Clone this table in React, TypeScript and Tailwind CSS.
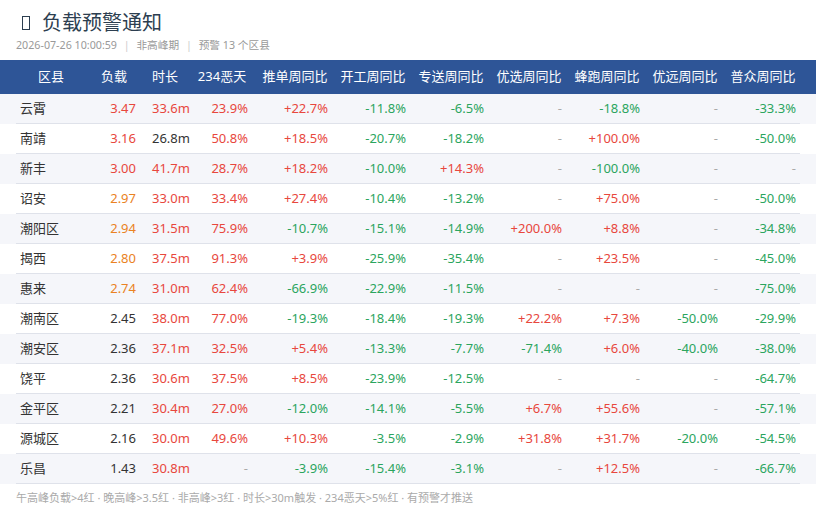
const RED = 'text-[#e8473d]'
const GREEN = 'text-[#2ba55e]'
const ORANGE = 'text-[#ea8223]'
const DARK = 'text-[#333333]'
const MUTED = 'text-[#aaaaaa]'

type Row = [string, string, string, string, ...string[]]

const rows: Row[] = [
  ['云霄', '3.47', '33.6m', '23.9%', '+22.7%', '-11.8%', '-6.5%', '-', '-18.8%', '-', '-33.3%'],
  ['南靖', '3.16', '26.8m', '50.8%', '+18.5%', '-20.7%', '-18.2%', '-', '+100.0%', '-', '-50.0%'],
  ['新丰', '3.00', '41.7m', '28.7%', '+18.2%', '-10.0%', '+14.3%', '-', '-100.0%', '-', '-'],
  ['诏安', '2.97', '33.0m', '33.4%', '+27.4%', '-10.4%', '-13.2%', '-', '+75.0%', '-', '-50.0%'],
  ['潮阳区', '2.94', '31.5m', '75.9%', '-10.7%', '-15.1%', '-14.9%', '+200.0%', '+8.8%', '-', '-34.8%'],
  ['揭西', '2.80', '37.5m', '91.3%', '+3.9%', '-25.9%', '-35.4%', '-', '+23.5%', '-', '-45.0%'],
  ['惠来', '2.74', '31.0m', '62.4%', '-66.9%', '-22.9%', '-11.5%', '-', '-', '-', '-75.0%'],
  ['潮南区', '2.45', '38.0m', '77.0%', '-19.3%', '-18.4%', '-19.3%', '+22.2%', '+7.3%', '-50.0%', '-29.9%'],
  ['潮安区', '2.36', '37.1m', '32.5%', '+5.4%', '-13.3%', '-7.7%', '-71.4%', '+6.0%', '-40.0%', '-38.0%'],
  ['饶平', '2.36', '30.6m', '37.5%', '+8.5%', '-23.9%', '-12.5%', '-', '-', '-', '-64.7%'],
  ['金平区', '2.21', '30.4m', '27.0%', '-12.0%', '-14.1%', '-5.5%', '+6.7%', '+55.6%', '-', '-57.1%'],
  ['源城区', '2.16', '30.0m', '49.6%', '+10.3%', '-3.5%', '-2.9%', '+31.8%', '+31.7%', '-20.0%', '-54.5%'],
  ['乐昌', '1.43', '30.8m', '-', '-3.9%', '-15.4%', '-3.1%', '-', '+12.5%', '-', '-66.7%'],
]

const headers = ['区县', '负载', '时长', '234恶天', '推单周同比', '开工周同比', '专送周同比', '优选周同比', '蜂跑周同比', '优远周同比', '普众周同比']

const cols = 'grid grid-cols-[70px_56px_46px_68px_repeat(7,78px)]'

function loadColor(v: string) {
  const n = parseFloat(v)
  if (n >= 3) return RED
  if (n >= 2.5) return ORANGE
  return DARK
}

function minColor(v: string) {
  return parseFloat(v) >= 30 ? RED : DARK
}

function pctColor(v: string) {
  if (v === '-') return MUTED
  return v.startsWith('+') ? RED : GREEN
}

function badColor(v: string) {
  if (v === '-') return MUTED
  return parseFloat(v) > 5 ? RED : DARK
}

export default function App() {
  return (
    <div
      className="w-[816px] h-[530px] bg-white overflow-hidden"
      style={{ fontFamily: '"Noto Sans", "Noto Sans CJK SC", sans-serif' }}
    >
      <div className="px-4 pt-2 pb-2">
        <h1 className="flex items-center text-[20px] leading-[30px] text-[#2c3e50]">
          <span className="ml-[6px] mr-[12px] inline-block w-[8px] h-[14px] border border-[#2c3e50]" />
          负载预警通知
        </h1>
        <p className="text-[10.7px] leading-[14px] text-[#999999]">
          2026-07-26 10:00:59 <span className="mx-1 text-[#cccccc]">|</span> 非高峰期{' '}
          <span className="mx-1 text-[#cccccc]">|</span> 预警 13 个区县
        </p>
      </div>

      <div className="bg-[#2e5597] text-white text-[13px]">
        <div className={`${cols} mx-4 h-[34px] items-center`}>
          {headers.map((h) => (
            <div key={h} className="text-center whitespace-nowrap">
              {h}
            </div>
          ))}
        </div>
      </div>

      {rows.map((r, i) => (
        <div key={r[0]} className={i % 2 === 0 ? 'bg-[#f5f6fa]' : 'bg-white'}>
          <div className={`${cols} mx-4 h-[30px] items-center border-b border-[#dfe2ea] text-[13px]`}>
            <div className={`pl-1 ${DARK}`}>{r[0]}</div>
            <div className={`text-right pr-1.5 ${loadColor(r[1])}`}>{r[1]}</div>
            <div className={`pl-2.5 ${minColor(r[2])}`}>{r[2]}</div>
            <div className={`text-right pr-2 ${badColor(r[3])}`}>{r[3]}</div>
            {r.slice(4).map((v, j) => (
              <div key={j} className={`text-right pr-1.5 ${pctColor(v)}`}>
                {v}
              </div>
            ))}
          </div>
        </div>
      ))}

      <p className="px-4 mt-[7px] text-[11px] leading-[14px] text-[#aaaaaa]">
        午高峰负载&gt;4红 · 晚高峰&gt;3.5红 · 非高峰&gt;3红 · 时长&gt;30m触发 · 234恶天&gt;5%红 · 有预警才推送
      </p>
    </div>
  )
}
